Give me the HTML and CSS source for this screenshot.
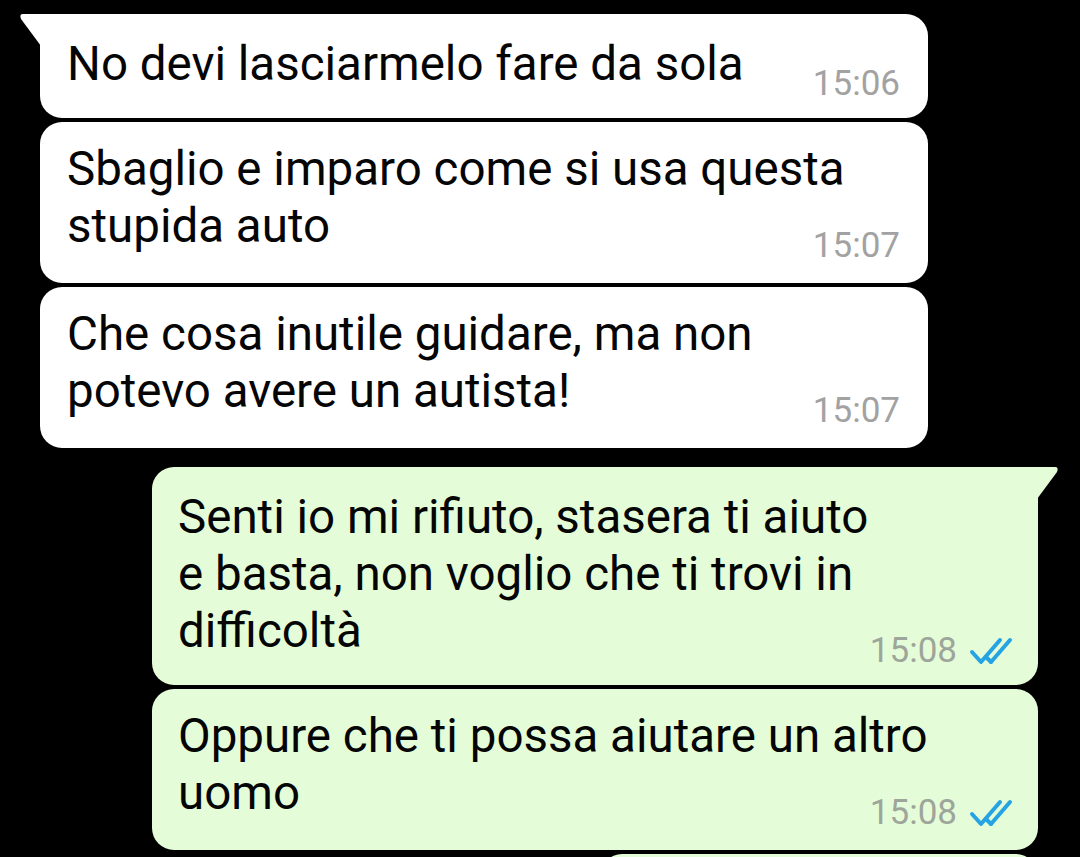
FILE: index.html
```html
<!DOCTYPE html>
<html lang="it">
<head>
    <meta charset="UTF-8">
    <meta name="viewport" content="width=device-width, initial-scale=1.0">
    <title>Chat</title>
    <link rel="stylesheet" href="styles.css">
</head>
<body>

    <div class="chat">

        <div class="msg in tail">
            <p class="text">No devi lasciarmelo fare da sola</p>
            <div class="meta"><span class="time">15:06</span></div>
        </div>

        <div class="msg in">
            <p class="text">Sbaglio e imparo come si usa questa<br>stupida auto</p>
            <div class="meta"><span class="time">15:07</span></div>
        </div>

        <div class="msg in">
            <p class="text">Che cosa inutile guidare, ma non<br>potevo avere un autista!</p>
            <div class="meta"><span class="time">15:07</span></div>
        </div>

        <div class="msg out tail">
            <p class="text">Senti io mi rifiuto, stasera ti aiuto<br>e basta, non voglio che ti trovi in<br>difficoltà</p>
            <div class="meta">
                <span class="time">15:08</span>
                <svg class="ticks" width="44" height="28" viewBox="0 0 44 28">
                    <path d="M3 15 L12 25 L31 3" />
                    <path d="M22 25 L41 3" />
                    <path d="M17 20 L22 25" />
                </svg>
            </div>
        </div>

        <div class="msg out">
            <p class="text">Oppure che ti possa aiutare un altro<br>uomo</p>
            <div class="meta">
                <span class="time">15:08</span>
                <svg class="ticks" width="44" height="28" viewBox="0 0 44 28">
                    <path d="M3 15 L12 25 L31 3" />
                    <path d="M22 25 L41 3" />
                    <path d="M17 20 L22 25" />
                </svg>
            </div>
        </div>

        <div class="msg out peek"></div>

    </div>

</body>
</html>
```

FILE: styles.css
```css
body {
    margin: 0;
    padding: 0;
    background-color: #000;
    font-family: Roboto, 'Noto Sans', sans-serif;
    color: #050505;
    overflow: hidden;
}

.chat {
    display: flex;
    flex-direction: column;
    gap: 4px;
    padding-top: 14px;
}


.msg {
    position: relative;
    box-sizing: border-box;
    width: 888px;
    padding: 19px 28px 17px 27px;
    border-radius: 22px;
}
.msg.in {
    background: #fff;
    margin-left: 40px;
}
.msg.out {
    background: #e4fdd8;
    margin-left: 152px;
    width: 886px;
    padding: 19px 25px 17px 26px;
}
.msg.in + .msg.out {
    margin-top: 15px;
}

.msg.tail {
    padding-top: 22px;
    padding-bottom: 14px;
}
.msg.tail.in {
    border-top-left-radius: 0;
}
.msg.tail.in::before {
    content: '';
    position: absolute;
    top: 0;
    left: -20px;
    width: 20px;
    height: 32px;
    background: #fff;
    clip-path: path('M3 0 H21 V32 L1 5 Q-1 0 3 0 Z');
}
.msg.tail.out {
    border-top-right-radius: 0;
}
.msg.tail.out::before {
    content: '';
    position: absolute;
    top: 0;
    right: -20px;
    width: 20px;
    height: 32px;
    background: #e4fdd8;
    clip-path: path('M-1 0 H17 Q21 0 19 5 L-1 32 Z');
}

.msg.peek {
    margin-left: 600px;
    width: 438px;
    height: 60px;
}


.text {
    margin: 0;
    font-size: 47.5px;
    line-height: 57px;
}

.meta {
    display: flex;
    justify-content: flex-end;
    align-items: center;
    gap: 12px;
    height: 40px;
    margin-top: -29px;
}
.time {
    font-size: 35px;
    line-height: 40px;
    color: #a2a2a2;
}
.out .time {
    color: #9ea59a;
}

.ticks {
    fill: none;
    stroke: #25a3e3;
    stroke-width: 4;
    stroke-linecap: round;
    stroke-linejoin: round;
}
```
